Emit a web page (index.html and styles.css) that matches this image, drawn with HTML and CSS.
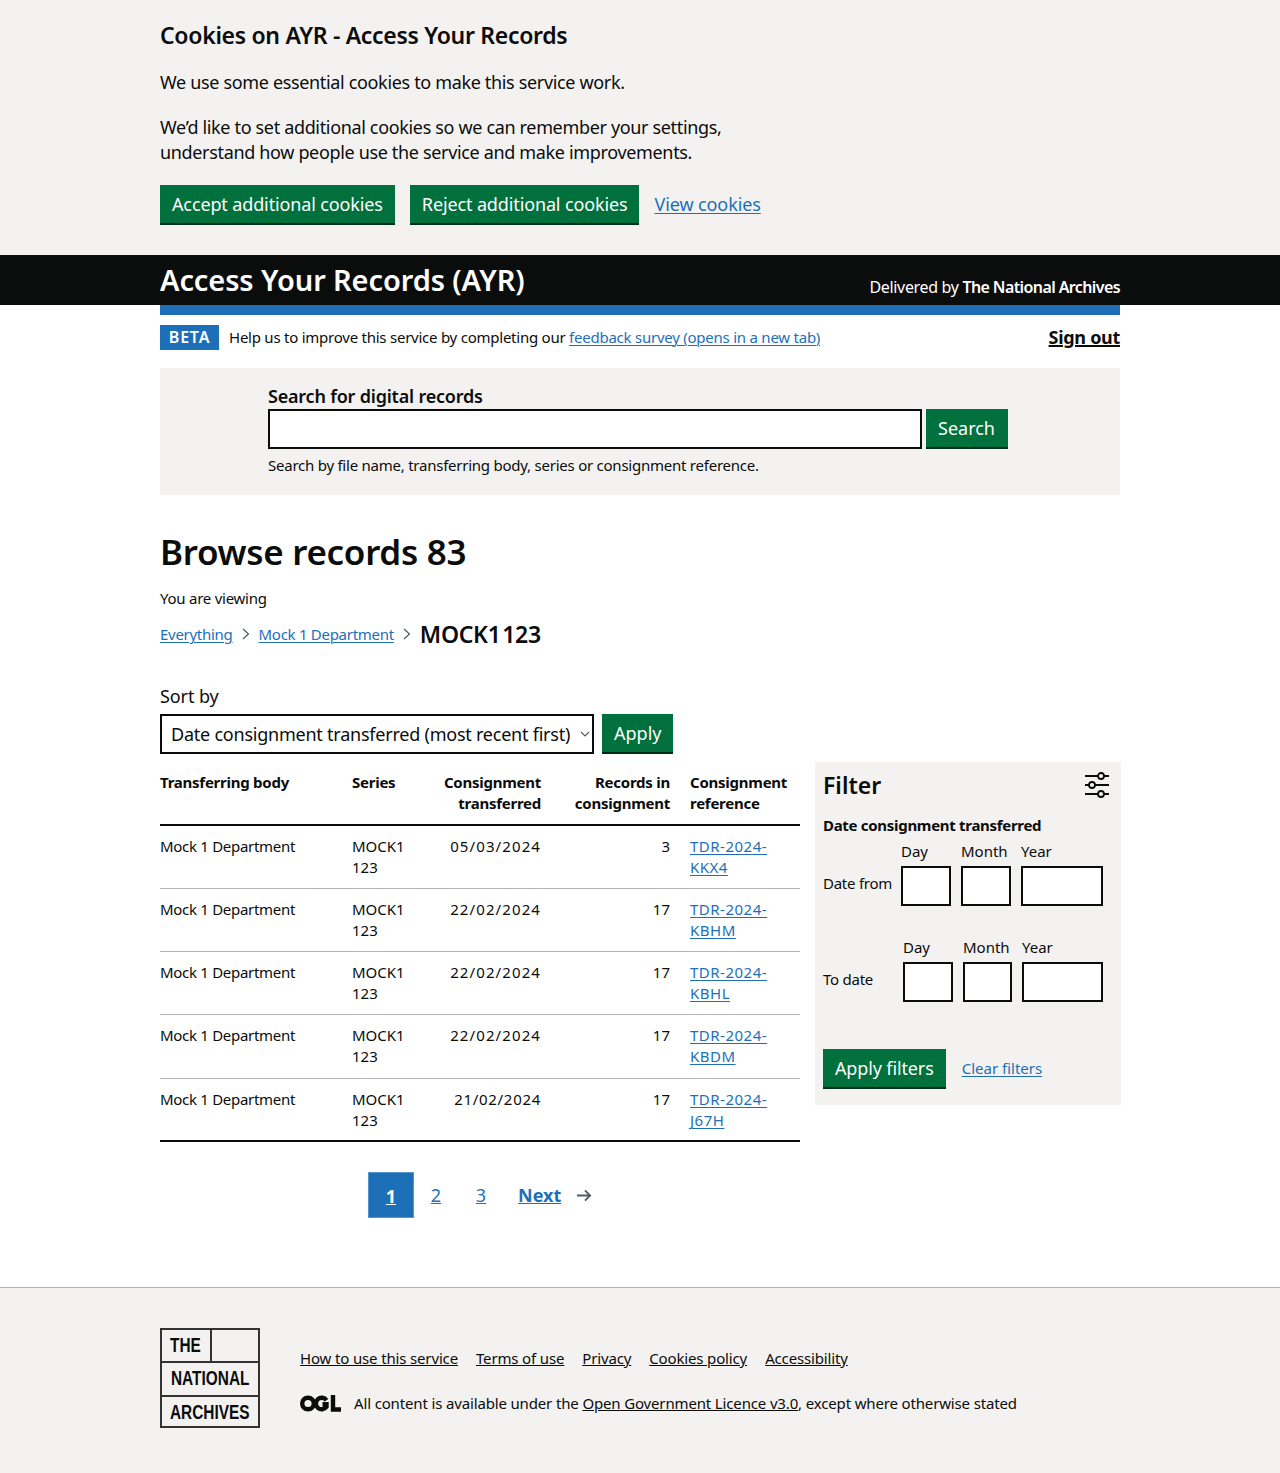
FILE: index.html
```html
<!DOCTYPE html>
<html lang="en">
<head>
<meta charset="UTF-8">
<title>Browse records - Access Your Records</title>
<link rel="stylesheet" href="styles.css">
</head>
<body>
<div class="cookie-banner">
    <div class="container">
        <h2 class="cookie-title">Cookies on AYR - Access Your Records</h2>
        <p class="cookie-text">We use some essential cookies to make this service work.</p>
        <p class="cookie-text">We’d like to set additional cookies so we can remember your settings, understand how people use the service and make improvements.</p>
        <div class="cookie-actions">
            <a class="button" href="#">Accept additional cookies</a>
            <a class="button" href="#">Reject additional cookies</a>
            <a class="link" href="#">View cookies</a>
        </div>
    </div>
</div>

<header class="site-header">
    <div class="container header-inner">
        <a class="service-name" href="#">Access Your Records (AYR)</a>
        <span class="delivered">Delivered by <strong>The National Archives</strong></span>
    </div>
</header>

<div class="container">
    <div class="blue-bar"></div>
    <div class="phase-row">
        <span class="tag">BETA</span>
        <span class="phase-text">Help us to improve this service by completing our <a class="link" href="#">feedback survey (opens in a new tab)</a></span>
        <a class="sign-out" href="#">Sign out</a>
    </div>

    <div class="search-panel">
        <div class="search-inner">
            <label class="search-label" for="search">Search for digital records</label>
            <div class="search-row">
                <input class="search-input" id="search" type="text">
                <a class="button" href="#">Search</a>
            </div>
            <p class="search-hint">Search by file name, transferring body, series or consignment reference.</p>
        </div>
    </div>

    <h1 class="page-title">Browse records 83</h1>
    <p class="viewing">You are viewing</p>
    <nav class="crumbs">
        <a class="link" href="#">Everything</a>
        <svg class="crumb-sep" viewBox="0 0 8 12" width="8" height="12"><path d="M1 1l5.500 5L1 11" fill="none" stroke="#505a5f" stroke-width="1.2"/></svg>
        <a class="link" href="#">Mock 1 Department</a>
        <svg class="crumb-sep" viewBox="0 0 8 12" width="8" height="12"><path d="M1 1l5.500 5L1 11" fill="none" stroke="#505a5f" stroke-width="1.2"/></svg>
        <span class="crumb-current">MOCK1 123</span>
    </nav>

    <label class="sort-label" for="sort">Sort by</label>
    <div class="sort-row">
        <div class="select-box" id="sort">
            <span>Date consignment transferred (most recent first)</span>
            <svg viewBox="0 0 10 6" width="10" height="6"><path d="M1 1l4 4 4-4" fill="none" stroke="#505a5f" stroke-width="1.1"/></svg>
        </div>
        <a class="button" href="#">Apply</a>
    </div>

    <div class="results">
        <table class="records">
            <thead>
                <tr>
                    <th class="col-body">Transferring body</th>
                    <th class="col-series">Series</th>
                    <th class="col-date num">Consignment transferred</th>
                    <th class="col-count num">Records in consignment</th>
                    <th class="col-ref">Consignment reference</th>
                </tr>
            </thead>
            <tbody>
                <tr><td class="dept">Mock 1 Department</td><td>MOCK1 123</td><td class="num date">05/03/2024</td><td class="num">3</td><td><a class="link ref" href="#">TDR-2024-KKX4</a></td></tr>
                <tr><td class="dept">Mock 1 Department</td><td>MOCK1 123</td><td class="num date">22/02/2024</td><td class="num">17</td><td><a class="link ref" href="#">TDR-2024-KBHM</a></td></tr>
                <tr><td class="dept">Mock 1 Department</td><td>MOCK1 123</td><td class="num date">22/02/2024</td><td class="num">17</td><td><a class="link ref" href="#">TDR-2024-KBHL</a></td></tr>
                <tr><td class="dept">Mock 1 Department</td><td>MOCK1 123</td><td class="num date">22/02/2024</td><td class="num">17</td><td><a class="link ref" href="#">TDR-2024-KBDM</a></td></tr>
                <tr><td class="dept">Mock 1 Department</td><td>MOCK1 123</td><td class="num date date-narrow">21/02/2024</td><td class="num">17</td><td><a class="link ref" href="#">TDR-2024-J67H</a></td></tr>
            </tbody>
        </table>

        <aside class="filter">
            <div class="filter-head">
                <h2 class="filter-title">Filter</h2>
                <svg class="filter-icon" viewBox="0 0 26 26" width="26" height="26">
                    <g fill="none" stroke="#0b0c0c" stroke-width="1.8">
                        <path d="M1 4h24M1 13h24M1 22h24"/>
                        <circle cx="17" cy="4" r="3" fill="#f3f2f1"/>
                        <circle cx="8" cy="13" r="3" fill="#f3f2f1"/>
                        <circle cx="17" cy="22" r="3" fill="#f3f2f1"/>
                    </g>
                </svg>
            </div>
            <h3 class="filter-sub">Date consignment transferred</h3>
            <div class="date-row date-from">
                <span class="date-name">Date from</span>
                <div class="date-part"><label>Day</label><input class="w2" type="text"></div>
                <div class="date-part"><label>Month</label><input class="w2" type="text"></div>
                <div class="date-part"><label>Year</label><input class="w4" type="text"></div>
            </div>
            <div class="date-row date-to">
                <span class="date-name">To date</span>
                <div class="date-part"><label>Day</label><input class="w2" type="text"></div>
                <div class="date-part"><label>Month</label><input class="w2" type="text"></div>
                <div class="date-part"><label>Year</label><input class="w4" type="text"></div>
            </div>
            <div class="filter-actions">
                <a class="button" href="#">Apply filters</a>
                <a class="link small" href="#">Clear filters</a>
            </div>
        </aside>
    </div>

    <nav class="pagination">
        <a class="page current" href="#">1</a>
        <a class="page" href="#">2</a>
        <a class="page" href="#">3</a>
        <a class="next" href="#">Next</a>
        <svg class="next-arrow" viewBox="0 0 16 13" width="15" height="13"><path d="M0 6.500h14M8.500 1l5.500 5.500L8.500 12" fill="none" stroke="#505a5f" stroke-width="2"/></svg>
    </nav>
</div>

<footer class="site-footer">
    <div class="container footer-inner">
        <div class="tna-logo">
            <div class="logo-top"><span class="logo-the"><span class="logo-word">THE</span></span><span class="logo-blank"></span></div>
            <div class="logo-line logo-national"><span class="logo-word">NATIONAL</span></div>
            <div class="logo-line"><span class="logo-word">ARCHIVES</span></div>
        </div>
        <div class="footer-main">
            <ul class="footer-links">
                <li><a href="#">How to use this service</a></li>
                <li><a href="#">Terms of use</a></li>
                <li><a href="#">Privacy</a></li>
                <li><a href="#">Cookies policy</a></li>
                <li><a href="#">Accessibility</a></li>
            </ul>
            <div class="licence">
                <svg class="ogl" viewBox="0 0 41 17" width="41" height="17">
                    <g fill="none" stroke="#0b0c0c" stroke-width="4.400">
                        <circle cx="8" cy="8.500" r="5.800"/>
                        <path d="M26.500 5.200a5.800 5.800 0 1 0 0 6.600V9.200h-4"/>
                        <path d="M33 0v14.500H41"/>
                    </g>
                </svg>
                <span>All content is available under the <a href="#">Open Government Licence v3.0</a>, except where otherwise stated</span>
            </div>
        </div>
    </div>
</footer>
</body>
</html>
```
FILE: styles.css
```css
* {
    box-sizing: border-box;
}
body {
    margin: 0;
    font-family: "Noto Sans", "Liberation Sans", sans-serif;
    color: #0b0c0c;
    background: #fff;
}
.container {
    width: 960px;
    margin: 0 auto;
}
.link {
    color: #1d70b8;
    text-decoration: underline;
    text-decoration-thickness: 1px;
    text-underline-offset: 2px;
}
.button {
    display: inline-block;
    height: 38px;
    padding: 0 12px;
    background: #00703c;
    box-shadow: 0 2px 0 #002d18;
    color: #fff;
    font-size: 18px;
    line-height: 38px;
    text-decoration: none;
    white-space: nowrap;
    letter-spacing: -0.13px;
}

/* cookie banner */
.cookie-banner {
    height: 255px;
    padding-top: 20px;
    background: #f3f2f1;
}
.cookie-title {
    margin: 0 0 20px;
    font-size: 23px;
    line-height: 30px;
    font-weight: 600;
    letter-spacing: -0.3px;
}
.cookie-text {
    width: 600px;
    margin: 0 0 20px;
    font-size: 18px;
    line-height: 25px;
    letter-spacing: -0.34px;
}
.cookie-actions {
    display: flex;
    align-items: flex-start;
    gap: 15px;
    margin-top: 20px;
    font-size: 18px;
    line-height: 38px;
}
.cookie-actions .link {
    letter-spacing: -0.1px;
}

/* header */
.site-header {
    height: 50px;
    background: #0b0c0c;
}
.header-inner {
    display: flex;
    justify-content: space-between;
    align-items: flex-end;
    height: 50px;
    color: #fff;
}
.service-name {
    color: #fff;
    font-size: 29px;
    line-height: 50px;
    font-weight: 600;
    letter-spacing: -0.1px;
    text-decoration: none;
}
.delivered {
    padding-bottom: 6px;
    font-size: 16px;
    line-height: 24px;
    letter-spacing: -0.33px;
}
.delivered strong {
    font-weight: 600;
    letter-spacing: -0.6px;
}
.blue-bar {
    height: 10px;
    background: #1d70b8;
}
.phase-row {
    display: flex;
    align-items: center;
    height: 25px;
    margin-top: 10px;
    font-size: 15px;
}
.tag {
    width: 59px;
    height: 25px;
    margin-right: 10px;
    background: #1d70b8;
    color: #fff;
    font-size: 16px;
    font-weight: 600;
    line-height: 25px;
    text-align: center;
    letter-spacing: 0.8px;
}
.phase-text {
    flex: 1;
    padding-bottom: 2px;
    letter-spacing: -0.24px;
}
.sign-out {
    padding-bottom: 2px;
    color: #0b0c0c;
    font-size: 18px;
    font-weight: 700;
    letter-spacing: -0.3px;
    text-decoration-thickness: 2px;
}

/* search */
.search-panel {
    height: 127px;
    margin-top: 18px;
    padding: 16px 0 0 108px;
    background: #f3f2f1;
}
.search-label {
    display: block;
    font-size: 18px;
    font-weight: 600;
    line-height: 25px;
    letter-spacing: -0.2px;
}
.search-row {
    display: flex;
    gap: 4px;
}
.search-row .button {
    width: 82px;
    letter-spacing: 0;
}
.search-input {
    width: 654px;
    height: 40px;
    border: 2px solid #0b0c0c;
    background: #fff;
}
.search-hint {
    margin: 6px 0 0;
    font-size: 15px;
    line-height: 20px;
    letter-spacing: -0.24px;
}

/* browse heading */
.page-title {
    margin: 34px 0 0;
    font-size: 35px;
    line-height: 45px;
    font-weight: 600;
    letter-spacing: -0.3px;
}
.viewing {
    margin: 14px 0 0;
    font-size: 15px;
    line-height: 20px;
    letter-spacing: -0.25px;
}
.crumbs {
    display: flex;
    align-items: center;
    height: 30px;
    margin-top: 11px;
    font-size: 15px;
    letter-spacing: -0.28px;
}
.crumb-sep {
    margin: 0 9px;
}
.crumb-current {
    font-size: 23px;
    font-weight: 600;
    letter-spacing: -0.3px;
    word-spacing: -4px;
}
.sort-label {
    display: block;
    margin-top: 35px;
    font-size: 18px;
    line-height: 25px;
    letter-spacing: -0.1px;
}
.sort-row {
    display: flex;
    gap: 8px;
    margin-top: 5px;
}
.sort-row .button {
    width: 71px;
    letter-spacing: 0;
}
.select-box {
    display: flex;
    align-items: center;
    justify-content: space-between;
    width: 434px;
    height: 40px;
    padding: 0 2px 0 9px;
    border: 2px solid #0b0c0c;
    font-size: 18px;
    letter-spacing: -0.23px;
    white-space: nowrap;
}

/* results table + filter */
.results {
    display: flex;
    align-items: flex-start;
    gap: 15px;
    margin-top: 8px;
    width: 961px;
}
.records {
    width: 640px;
    flex: none;
    border-collapse: collapse;
    table-layout: fixed;
    font-size: 15px;
    line-height: 21px;
}
.records th {
    padding: 10px 20px 10px 0;
    border-bottom: 2px solid #0b0c0c;
    font-weight: 700;
    letter-spacing: -0.25px;
    text-align: left;
    vertical-align: top;
}
.records td {
    padding: 10px 20px 10px 0;
    border-bottom: 1px solid #b1b4b6;
    vertical-align: top;
}
.records tr:nth-child(4) td {
    padding-bottom: 11px;
}
.records tr:last-child td {
    padding-bottom: 9px;
    border-bottom: 2px solid #0b0c0c;
}
.records td:last-child, .records th:last-child {
    padding-right: 0;
}
.records .num {
    text-align: right;
}
.records .dept {
    letter-spacing: -0.3px;
}
.records .date {
    letter-spacing: 1.1px;
}
.records .date-narrow {
    letter-spacing: 0.7px;
}
.records .ref {
    letter-spacing: 0.5px;
}
.col-body { width: 192px; }
.col-series { width: 76px; }
.col-date { width: 133px; }
.col-count { width: 129px; }
.col-ref { width: 110px; }

.filter {
    width: 306px;
    height: 343px;
    padding: 8px;
    background: #f3f2f1;
}
.filter-head {
    display: flex;
    justify-content: space-between;
    align-items: center;
    height: 30px;
    padding-right: 3px;
}
.filter-title {
    margin: 0;
    font-size: 23px;
    line-height: 30px;
    font-weight: 600;
}
.filter-sub {
    margin: 15px 0 6px;
    font-size: 15px;
    line-height: 20px;
    font-weight: 700;
    letter-spacing: -0.3px;
}
.date-row {
    display: flex;
    align-items: flex-end;
    gap: 10px;
}
.date-to {
    margin-top: 31px;
}
.date-name {
    padding-bottom: 3px;
    font-size: 15px;
    line-height: 40px;
    letter-spacing: -0.25px;
    white-space: nowrap;
}
.date-from .date-name {
    width: 68px;
}
.date-to .date-name {
    width: 70px;
}
.date-part label {
    display: block;
    margin-bottom: 5px;
    font-size: 15px;
    line-height: 20px;
}
.date-part input {
    display: block;
    height: 40px;
    border: 2px solid #0b0c0c;
    background: #fff;
}
.w2 {
    width: 50px;
}
.w4 {
    width: 82px;
}
.date-to .date-part:nth-child(3) input {
    width: 49px;
}
.date-to .w4 {
    width: 81px;
}
.filter-actions {
    display: flex;
    align-items: flex-start;
    gap: 16px;
    margin-top: 47px;
    line-height: 38px;
}
.small {
    font-size: 15px;
}

/* pagination */
.pagination {
    display: flex;
    align-items: center;
    margin: 30px 0 0 208px;
    height: 46px;
    font-size: 18px;
}
.page {
    width: 46px;
    height: 46px;
    color: #1d70b8;
    line-height: 46px;
    text-align: center;
}
.current {
    border: 1px solid #5694ca;
    background: #1d70b8;
    color: #fff;
    font-weight: 700;
}
.page + .page {
    margin-left: -1px;
}
.next {
    margin-left: 14px;
    color: #1d70b8;
    font-weight: 700;
}
.next-arrow {
    margin-left: 16px;
}

/* footer */
.site-footer {
    height: 186px;
    margin-top: 69px;
    border-top: 1px solid #b1b4b6;
    background: #f3f2f1;
    font-size: 15px;
}
.footer-inner {
    display: flex;
    padding-top: 40px;
}
.site-footer a {
    color: #0b0c0c;
}
.tna-logo {
    width: 100px;
    height: 100px;
    border: 2px solid #333;
    font-family: "Liberation Sans", sans-serif;
    font-size: 20px;
    font-weight: 700;
    color: #0b0c0c;
}
.logo-word {
    display: inline-block;
    white-space: nowrap;
    transform: scaleX(0.77);
    transform-origin: left center;
}
.logo-top {
    display: flex;
    height: 33px;
    border-bottom: 2px solid #333;
}
.logo-the {
    width: 50px;
    padding-left: 8px;
    border-right: 2px solid #333;
    line-height: 31px;
}
.logo-line {
    height: 32px;
    padding-left: 8px;
    line-height: 31px;
}
.logo-national {
    padding-left: 9px;
}
.logo-line + .logo-line {
    border-top: 2px solid #333;
}
.footer-main {
    margin-left: 40px;
}
.footer-links {
    display: flex;
    gap: 18px;
    margin: 20px 0 0;
    padding: 0;
    list-style: none;
    line-height: 20px;
    letter-spacing: -0.15px;
}
.licence {
    display: flex;
    align-items: center;
    gap: 13px;
    margin-top: 25px;
    line-height: 20px;
    letter-spacing: -0.15px;
}
```
